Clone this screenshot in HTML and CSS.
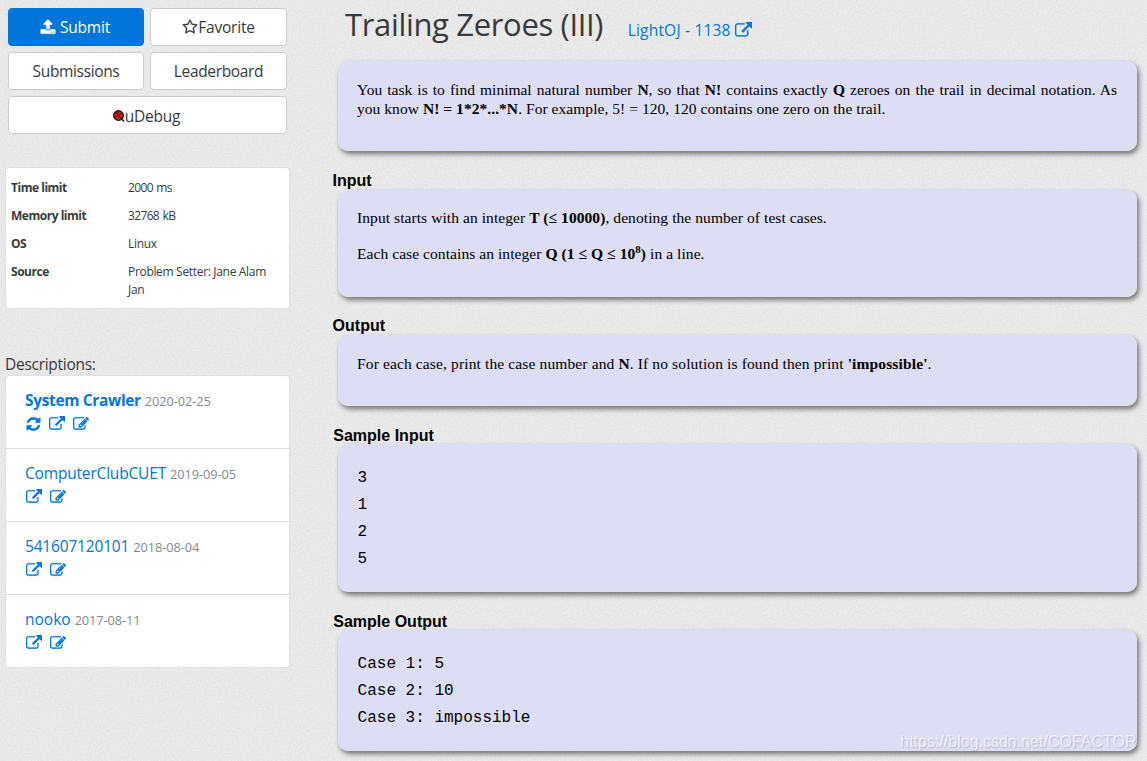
FILE: index.html
```html
<!DOCTYPE html>
<html lang="en">
<head>
<meta charset="utf-8">
<title>Trailing Zeroes (III)</title>
<link rel="stylesheet" href="styles.css">
</head>
<body>
<svg class="defs" aria-hidden="true">
  <symbol id="ext" viewBox="0 0 1792 1792"><path d="M1408 928v320q0 119-84.5 203.5t-203.5 84.5h-832q-119 0-203.5-84.5t-84.5-203.5v-832q0-119 84.5-203.5t203.5-84.5h704q14 0 23 9t9 23v64q0 14-9 23t-23 9h-704q-66 0-113 47t-47 113v832q0 66 47 113t113 47h832q66 0 113-47t47-113v-320q0-14 9-23t23-9h64q14 0 23 9t9 23zm384-864v512q0 26-19 45t-45 19-45-19l-176-176-652 652q-10 10-23 10t-23-10l-114-114q-10-10-10-23t10-23l652-652-176-176q-19-19-19-45t19-45 45-19h512q26 0 45 19t19 45z"/></symbol>
  <symbol id="edit" viewBox="0 0 1792 1792"><path d="M888 1184l116-116-152-152-116 116v56h96v96h56zm440-720q-16-16-33 1l-350 350q-17 17-1 33t33-1l350-350q17-17 1-33zm80 594v190q0 119-84.5 203.5t-203.5 84.5h-832q-119 0-203.5-84.5t-84.5-203.5v-832q0-119 84.5-203.5t203.5-84.5h832q63 0 117 25 15 7 18 23 3 17-9 29l-49 49q-14 14-32 8-23-6-45-6h-832q-66 0-113 47t-47 113v832q0 66 47 113t113 47h832q66 0 113-47t47-113v-126q0-13 9-22l64-64q15-15 35-7t20 29zm-96-738l288 288-672 672h-288v-288zm444 132l-92 92-288-288 92-92q28-28 68-28t68 28l152 152q28 28 28 68t-28 68z"/></symbol>
  <symbol id="refresh" viewBox="128 0 1536 1792"><path d="M1639 1056q0 5-1 7-64 268-268 434.5t-478 166.5q-146 0-282.5-55t-243.5-157l-129 129q-19 19-45 19t-45-19-19-45v-448q0-26 19-45t45-19h448q26 0 45 19t19 45-19 45l-137 137q71 66 161 102t187 36q134 0 250-65t186-179q11-17 53-117 8-23 30-23h192q13 0 22.5 9.5t9.5 22.5zm25-800v448q0 26-19 45t-45 19h-448q-26 0-45-19t-19-45 19-45l138-138q-148-137-349-137-134 0-250 65t-186 179q-11 17-53 117-8 23-30 23h-199q-13 0-22.5-9.5t-9.5-22.5v-7q65-268 270-434.5t480-166.5q146 0 284 55.5t245 156.5l130-129q19-19 45-19t45 19 19 45z"/></symbol>
  <symbol id="star" viewBox="64 0 1664 1792"><path d="M1201 1004l306-297-422-62-189-382-189 382-422 62 306 297-73 421 378-199 377 199zm527-357q0 22-26 48l-363 354 86 500q1 7 1 20 0 50-41 50-19 0-40-12l-449-236-449 236q-22 12-40 12-21 0-31.5-14.5t-10.5-35.5q0-6 2-20l86-500-364-354q-25-27-25-48 0-37 56-46l502-73 225-455q19-41 49-41t49 41l225 455 502 73q56 9 56 46z"/></symbol>
  <symbol id="upload" viewBox="64 0 1664 1792"><path d="M1344 1472q0-26-19-45t-45-19-45 19-19 45 19 45 45 19 45-19 19-45zm256 0q0-26-19-45t-45-19-45 19-19 45 19 45 45 19 45-19 19-45zm128-224v320q0 40-28 68t-68 28h-1472q-40 0-68-28t-28-68v-320q0-40 28-68t68-28h427q21 56 70.5 92t110.5 36h256q61 0 110.5-36t70.5-92h427q40 0 68 28t28 68zm-325-648q-17 40-59 40h-256v448q0 26-19 45t-45 19h-256q-26 0-45-19t-19-45v-448h-256q-42 0-59-40-17-39 14-69l448-448q18-19 45-19t45 19l448 448q31 30 14 69z"/></symbol>
</svg>
<aside class="sidebar">
  <div class="buttons">
    <a class="btn primary"><svg class="ic"><use href="#upload"/></svg><span class="submit">Submit</span></a>
    <a class="btn"><svg class="ic star"><use href="#star"/></svg><span class="favorite">Favorite</span></a>
    <a class="btn"><span class="submissions">Submissions</span></a>
    <a class="btn"><span class="leaderboard">Leaderboard</span></a>
    <a class="btn wide"><svg class="bug" viewBox="0 0 12 12"><path d="M8 8l3 3.5" stroke="#222" stroke-width="1.6"/><circle cx="5.5" cy="5.5" r="4.8" fill="#e01c08" stroke="#181010" stroke-width="1.3"/><path d="M2.5 2l6 7M5 1.5l.5 2M8.5 3l-2 2M2 6l2 .5" stroke="#181010" stroke-width=".9"/></svg><span class="udebug">uDebug</span></a>
  </div>
  <dl class="card info">
    <dt>Time limit</dt><dd class="short">2000 ms</dd>
    <dt>Memory limit</dt><dd class="short">32768 kB</dd>
    <dt>OS</dt><dd>Linux</dd>
    <dt>Source</dt><dd>Problem Setter: Jane Alam Jan</dd>
  </dl>
  <div class="label">Descriptions:</div>
  <ul class="card list">
    <li><div class="row"><a class="name crawler">System Crawler</a><span class="date">2020-02-25</span></div><div class="icons"><svg class="ic refresh"><use href="#refresh"/></svg><svg class="ic"><use href="#ext"/></svg><svg class="ic"><use href="#edit"/></svg></div></li>
    <li><div class="row"><a class="name">ComputerClubCUET</a><span class="date">2019-09-05</span></div><div class="icons"><svg class="ic"><use href="#ext"/></svg><svg class="ic"><use href="#edit"/></svg></div></li>
    <li><div class="row"><a class="name">541607120101</a><span class="date">2018-08-04</span></div><div class="icons"><svg class="ic"><use href="#ext"/></svg><svg class="ic"><use href="#edit"/></svg></div></li>
    <li><div class="row"><a class="name nooko">nooko</a><span class="date">2017-08-11</span></div><div class="icons"><svg class="ic"><use href="#ext"/></svg><svg class="ic"><use href="#edit"/></svg></div></li>
  </ul>
</aside>
<main class="main">
  <header class="head"><h1>Trailing Zeroes (III)</h1><a class="origin"><span>LightOJ - 1138</span><svg class="ic"><use href="#ext"/></svg></a></header>
  <section class="panel task"><p class="justify">You task is to find minimal natural number <b>N</b>, so that <b>N!</b> contains exactly <b>Q</b> zeroes on the trail in decimal notation. As</p><p class="second">you know <b>N! = 1*2*...*N</b>. For example, 5! = 120, 120 contains one zero on the trail.</p></section>
  <h2 class="first">Input</h2>
  <section class="panel input"><p class="in1">Input starts with an integer <b>T (≤ 10000)</b>, denoting the number of test cases.</p><p class="in2">Each case contains an integer <b>Q (1 ≤ Q ≤ 10<sup>8</sup>)</b> in a line.</p></section>
  <h2>Output</h2>
  <section class="panel output"><p class="out1">For each case, print the case number and <b>N</b>. If no solution is found then print <b>'impossible'</b>.</p></section>
  <h2 class="sample">Sample Input</h2>
  <pre class="panel sin">3
1
2
5</pre>
  <h2 class="sample">Sample Output</h2>
  <pre class="panel sout">Case 1: 5
Case 2: 10
Case 3: impossible</pre>
</main>
<div class="watermark">https://blog.csdn.net/COFACTOR</div>
</body>
</html>
```
FILE: styles.css
```css
* { box-sizing: border-box; }
body {
  margin: 0;
  width: 1147px;
  height: 761px;
  overflow: hidden;
  display: flex;
  background: #ececec url("data:image/svg+xml,%3Csvg xmlns='http://www.w3.org/2000/svg' width='200' height='200'%3E%3Cfilter id='n'%3E%3CfeTurbulence type='fractalNoise' baseFrequency='.6' numOctaves='2' stitchTiles='stitch'/%3E%3CfeColorMatrix values='0 0 0 0 0 0 0 0 0 0 0 0 0 0 0 .08 0 0 0 -.025'/%3E%3C/filter%3E%3Crect width='200' height='200' filter='url(%23n)'/%3E%3C/svg%3E");
  color: #373a3c;
  font-family: "Open Sans", "Noto Sans", sans-serif;
  font-size: 16px;
  position: relative;
}
.defs { position: absolute; width: 0; height: 0; }
.ic { width: 16px; height: 16px; fill: currentColor; stroke: currentColor; stroke-width: 30; flex: none; }
.sidebar { width: 332px; flex: none; padding: 8px 42px 0 5px; }
.buttons { display: grid; grid-template-columns: 136px 137px; grid-auto-rows: 38px; gap: 6px; margin-left: 3px; }
.btn {
  display: flex; align-items: center; justify-content: center;
  background: #fff; border: 1px solid #ccc; border-radius: 4px;
  font-size: 15.5px; line-height: 24px; white-space: nowrap; letter-spacing: -.2px;
}
.submissions, .leaderboard { letter-spacing: -.35px; }
.primary { background: #0275d8; border-color: #0275d8; color: #fff; gap: 4px; padding-right: 2px; }
.wide { grid-column: span 2; padding: 1px 2px 0 0; }
.bug { width: 12px; height: 12px; margin-top: 1px; }
.card { background: #fff; border: 1px solid #dfdfdf; border-radius: 4px; margin: 0; padding: 0; width: 285px; list-style: none; }
.info { margin-top: 33px; height: 142px; padding: 11px 5px 0; display: grid; grid-template-columns: 117px 150px; grid-template-rows: 28px 28px 28px 36px; font-size: 12px; line-height: 18px; letter-spacing: -.32px; }
.info dt { font-weight: 700; letter-spacing: -.48px; }
.info dd { margin: 0; }
.info .short { letter-spacing: -.65px; word-spacing: 1px; }
.label { margin: 43px 0 0; height: 23px; line-height: 24px; font-size: 15.5px; letter-spacing: -.28px; }
.list li { height: 73px; padding: 12px 19px 0; border-bottom: 1px solid #ddd; }
.list li:last-child { border-bottom: 0; height: 72px; }
.list { height: 293px; }
.row { display: flex; align-items: baseline; gap: 4px; height: 26px; line-height: 25px; white-space: nowrap; }
.name { color: #0275d8; font-size: 15.5px; letter-spacing: -.18px; }
.crawler { font-weight: 700; letter-spacing: -.35px; }
.nooko { letter-spacing: 0; }
.date { color: #818a91; font-size: 12.8px; letter-spacing: -.08px; }
.icons { display: flex; gap: 8px; color: #0275d8; padding: 2px 0 0 .5px; }
.refresh { width: 15px; }
.main { width: 815px; padding-right: 10px; }
.head { display: flex; height: 61px; padding: 2px 0 0 13px; align-items: flex-start; }
h1 { margin: 0; font-size: 31px; line-height: 44px; font-weight: 400; white-space: nowrap; letter-spacing: -.34px; }
.origin { display: flex; gap: 4px; color: #0275d8; font-size: 15.5px; line-height: 24px; margin: 16px 0 0 24.5px; white-space: nowrap; letter-spacing: .2px; }
.origin .ic { margin-top: 4px; width: 17px; height: 17px; }
.panel {
  margin: 0 0 0 6px; width: 799px; padding: 19px 20px 0 19px;
  background: rgba(220, 220, 245, .9);
  border-radius: 10px; box-shadow: 2px 3px 5px rgba(0, 0, 0, .5);
  font: 15.5px/19px "Liberation Serif", serif; color: #000;
}
.panel p { margin: 0; white-space: nowrap; }
.justify { text-align-last: justify; }
.second { letter-spacing: .05px; }
.task { height: 90px; }
.input { height: 107px; padding-top: 18px; margin-top: 1px; }
.in1 { letter-spacing: .075px; }
.input .in1 { margin-bottom: 17px; }
.in2 { letter-spacing: .07px; }
.out1 { letter-spacing: .13px; }
.output { height: 71px; }
h2 { margin: 0; height: 38px; padding: 19px 0 0 .6px; font: 700 16px/20px "Liberation Sans", sans-serif; color: #000; }
.first { padding-top: 20px; }
.sample { padding-top: 20px; padding-left: 1.3px; }
sup { font-size: 11px; line-height: 0; }
.sin, .sout { font: 16px/27px "Liberation Mono", monospace; padding-top: 21px; padding-left: 19.6px; }
.sin { height: 148px; }
.sout { height: 121px; }
.watermark { position: absolute; right: 10.5px; top: 733px; font: 16px/18px "Liberation Sans", sans-serif; color: rgba(255, 255, 255, .65); text-shadow: 1px 1px 1px rgba(0, 0, 0, .16); }
```
